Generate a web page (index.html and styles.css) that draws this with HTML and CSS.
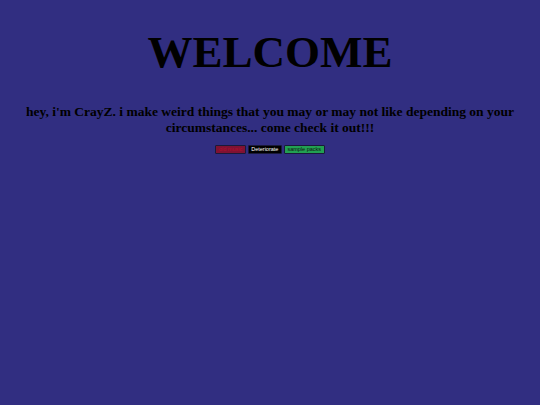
FILE: index.html
```html
<!DOCTYPE html>
<html>
<head>
    <meta charset="utf-8"/>
    <title>WELCOME</title>
    <link rel="stylesheet" href="styles.css">
</head>
<body>
<h1 class="title">WELCOME</h1>
<h2 class="intro">hey, i'm CrayZ. i make weird things that you may or may not like depending on your circumstances... come check it out!!!</h2>
<div class="links">
    <button class="btn btn-music">old music</button>
    <button class="btn btn-game">Deteriorate</button>
    <button class="btn btn-packs">sample packs</button>
</div>
</body>
</html>
```

FILE: styles.css
```css
body {
    margin: 8px;
    background: #312e81;
    color: #000;
    font-family: "Liberation Serif", serif;
    text-align: center;
}

.title {
    font-size: 45px;
    font-weight: bold;
    line-height: 52px;
    margin: 18px 0 0;
}

.intro {
    font-size: 13.5px;
    font-weight: bold;
    line-height: 16px;
    margin: 26px 0 0;
}

.links {
    display: flex;
    justify-content: center;
    gap: 2px;
    margin-top: 9px;
}

.btn {
    font-family: "Liberation Sans", sans-serif;
    font-size: 5.5px;
    line-height: 7px;
    height: 7px;
    padding: 0 2.5px;
    border: 1px solid #1a1a3a;
    border-radius: 1px;
    box-sizing: content-box;
}

.btn-music {
    background: #7f1233;
    color: #b0102c;
}

.btn-game {
    background: #000;
    color: #fff;
}

.btn-packs {
    background: #22a052;
    color: #111;
}
```
